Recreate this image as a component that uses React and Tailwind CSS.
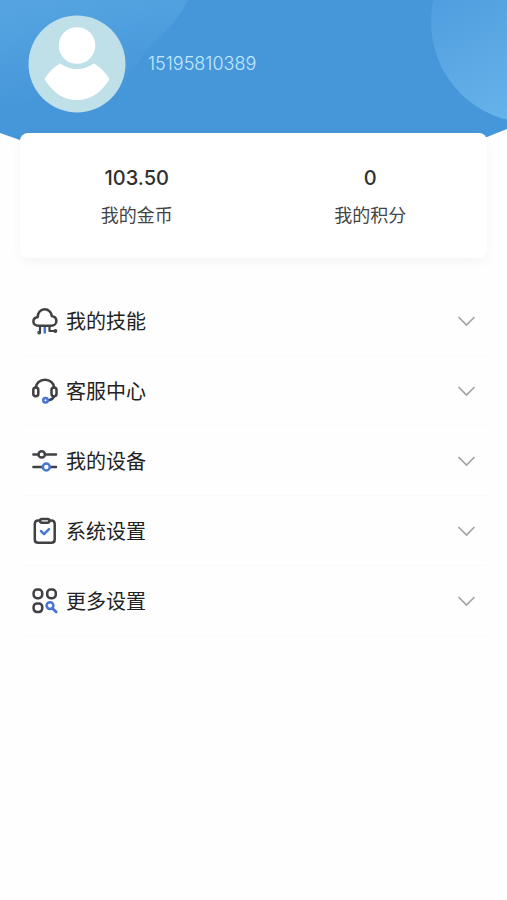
import React from "react";

const stats = [
  { label: "我的金币", value: "103.50" },
  { label: "我的积分", value: "0" },
];

function IconBase({ children }) {
  return (
    <svg
      className="size-7 shrink-0"
      viewBox="0 0 28 28"
      fill="none"
      stroke="#414145"
      strokeWidth="2.5"
      strokeLinecap="round"
      strokeLinejoin="round"
      aria-hidden="true"
    >
      {children}
    </svg>
  );
}

function CloudIcon() {
  return (
    <IconBase>
      <path d="M7.5 18.8C4.4 18.8 2.4 17 2.4 14.6C2.4 12.2 4.2 10.5 6.6 10.3C6.7 5.6 9.6 2.2 13.6 2.2C17.4 2.2 20.3 5.2 20.7 8.9C23.4 9.3 25.4 11.3 25.4 14C25.4 16.8 23.2 18.8 20.2 18.8Z" />
      <path d="M9 19.500V25.500M18.500 19.500V24H24.500" strokeWidth="2.2" />
      <path d="M13.800 20V26.500" stroke="#4677d2" strokeWidth="2.6" strokeLinecap="butt" />
      <circle cx="8.2" cy="25.6" r="0.7" />
      <circle cx="24.4" cy="24" r="0.7" />
    </IconBase>
  );
}

function HeadsetIcon() {
  return (
    <IconBase>
      <path d="M4.800 10.800C5 6 9 2.700 14 2.700S23 6 23.200 10.800" />
      <rect x="2.300" y="10.600" width="5" height="8.600" rx="2.500" />
      <rect x="20.500" y="10.600" width="5" height="8.600" rx="2.500" />
      <path d="M22.900 19.500C22 21.800 20 23 17.500 23.200" />
      <circle cx="14.500" cy="23.200" r="2.300" stroke="#4677d2" />
    </IconBase>
  );
}

function SlidersIcon() {
  return (
    <IconBase>
      <path d="M2.400 7.400H7.200M14.200 7.400H25M2.400 20H11.400M19.200 20H25" />
      <circle cx="10.700" cy="7.400" r="3.200" />
      <circle cx="15.300" cy="20" r="3.500" stroke="#4677d2" />
    </IconBase>
  );
}

function ClipboardIcon() {
  return (
    <IconBase>
      <path d="M9 3.500H7.200Q3.800 3.500 3.800 7V22.400Q3.800 25.800 7.200 25.800H20.300Q23.700 25.800 23.700 22.400V7Q23.700 3.500 20.300 3.500H18.500" />
      <rect x="9" y="1.900" width="9.500" height="3.800" rx="1.900" />
      <path d="M10 14.200L13.100 17.200L18 12.200" stroke="#4677d2" />
    </IconBase>
  );
}

function GridSearchIcon() {
  return (
    <IconBase>
      <rect x="2.600" y="2.600" width="8.600" height="8.600" rx="3.400" />
      <rect x="16.200" y="2.600" width="8.600" height="8.600" rx="3.400" />
      <rect x="2.600" y="16.400" width="8.600" height="8.600" rx="3.400" />
      <circle cx="19" cy="18.600" r="3.400" stroke="#4677d2" />
      <path d="M21.600 21.400L25.200 25" stroke="#4677d2" strokeWidth="2.800" />
    </IconBase>
  );
}

const menu = [
  { label: "我的技能", Icon: CloudIcon },
  { label: "客服中心", Icon: HeadsetIcon },
  { label: "我的设备", Icon: SlidersIcon },
  { label: "系统设置", Icon: ClipboardIcon },
  { label: "更多设置", Icon: GridSearchIcon },
];

function HeaderBackdrop() {
  return (
    <svg
      className="absolute inset-x-0 top-0 -z-10 h-[160px] w-full"
      viewBox="0 0 507 160"
      preserveAspectRatio="none"
      aria-hidden="true"
    >
      <defs>
        <linearGradient id="left-glow" gradientUnits="userSpaceOnUse" x1="60" y1="0" x2="78" y2="95">
          <stop offset="0" stopColor="#55a4e1" />
          <stop offset="1" stopColor="#4697da" />
        </linearGradient>
        <linearGradient id="right-glow" gradientUnits="userSpaceOnUse" x1="450" y1="0" x2="507" y2="115">
          <stop offset="0" stopColor="#519fdf" />
          <stop offset="1" stopColor="#66b2ea" />
        </linearGradient>
        <clipPath id="header-shape">
          <path d="M0 0H507V129L487 137Q254 190 20 140L0 133Z" />
        </clipPath>
      </defs>
      <g clipPath="url(#header-shape)">
        <rect width="507" height="160" fill="#4697da" />
        <path d="M0 0H188C176 24 160 36 147 50C126 74 110 125 60 125H0Z" fill="url(#left-glow)" />
        <circle cx="532" cy="22" r="101" fill="url(#right-glow)" />
      </g>
    </svg>
  );
}

function Avatar() {
  return (
    <svg className="size-[98px] shrink-0" viewBox="0 0 98 98" role="img" aria-label="头像">
      <circle cx="49" cy="49" r="48.5" fill="#bfe0e8" />
      <circle cx="49" cy="30.5" r="18.3" fill="#fff" />
      <path
        d="M32 48.5Q49 59.5 66 48.5Q75 53.5 81.5 64Q69 85 49 85T16.500 64Q23 53.500 32 48.500Z"
        fill="#fff"
      />
    </svg>
  );
}

export default function App() {
  return (
    <div className="min-h-screen bg-[#fefefe] font-['Inter','Noto_Sans_CJK_SC',sans-serif] text-[#2b2b2b]">
      <div className="relative isolate">
        <HeaderBackdrop />
        <header className="flex items-center gap-[22px] px-7 pt-[15px] pb-5">
          <Avatar />
          <p className="text-lg font-light text-[#c2e9ff]">15195810389</p>
        </header>
        <section className="mx-5 grid grid-cols-2 rounded-lg bg-white pt-[31px] pb-7 shadow-[0_4px_12px_rgba(0,0,0,0.04)]">
          {stats.map(({ label, value }) => (
            <div key={label} className="flex flex-col items-center gap-[10px]">
              <strong className="text-xl leading-7 font-medium text-[#303030]">{value}</strong>
              <span className="text-lg leading-7 text-[#444]">{label}</span>
            </div>
          ))}
        </section>
      </div>
      <nav className="mx-5 mt-7">
        <ul>
          {menu.map(({ label, Icon }) => (
            <li key={label} className="border-b border-[#fafafa]">
              <button type="button" className="flex h-[69px] w-full items-center px-[11px] text-left">
                <Icon />
                <span className="ml-[7px] flex-1 pt-[3px] text-[20px] leading-7 text-[#222]">{label}</span>
                <svg
                  className="h-3 w-5"
                  viewBox="0 0 20 12"
                  fill="none"
                  stroke="#a3a3a3"
                  strokeWidth="1.7"
                  aria-hidden="true"
                >
                  <path d="M2.500 2L10.500 10L18.500 2" />
                </svg>
              </button>
            </li>
          ))}
        </ul>
      </nav>
    </div>
  );
}
